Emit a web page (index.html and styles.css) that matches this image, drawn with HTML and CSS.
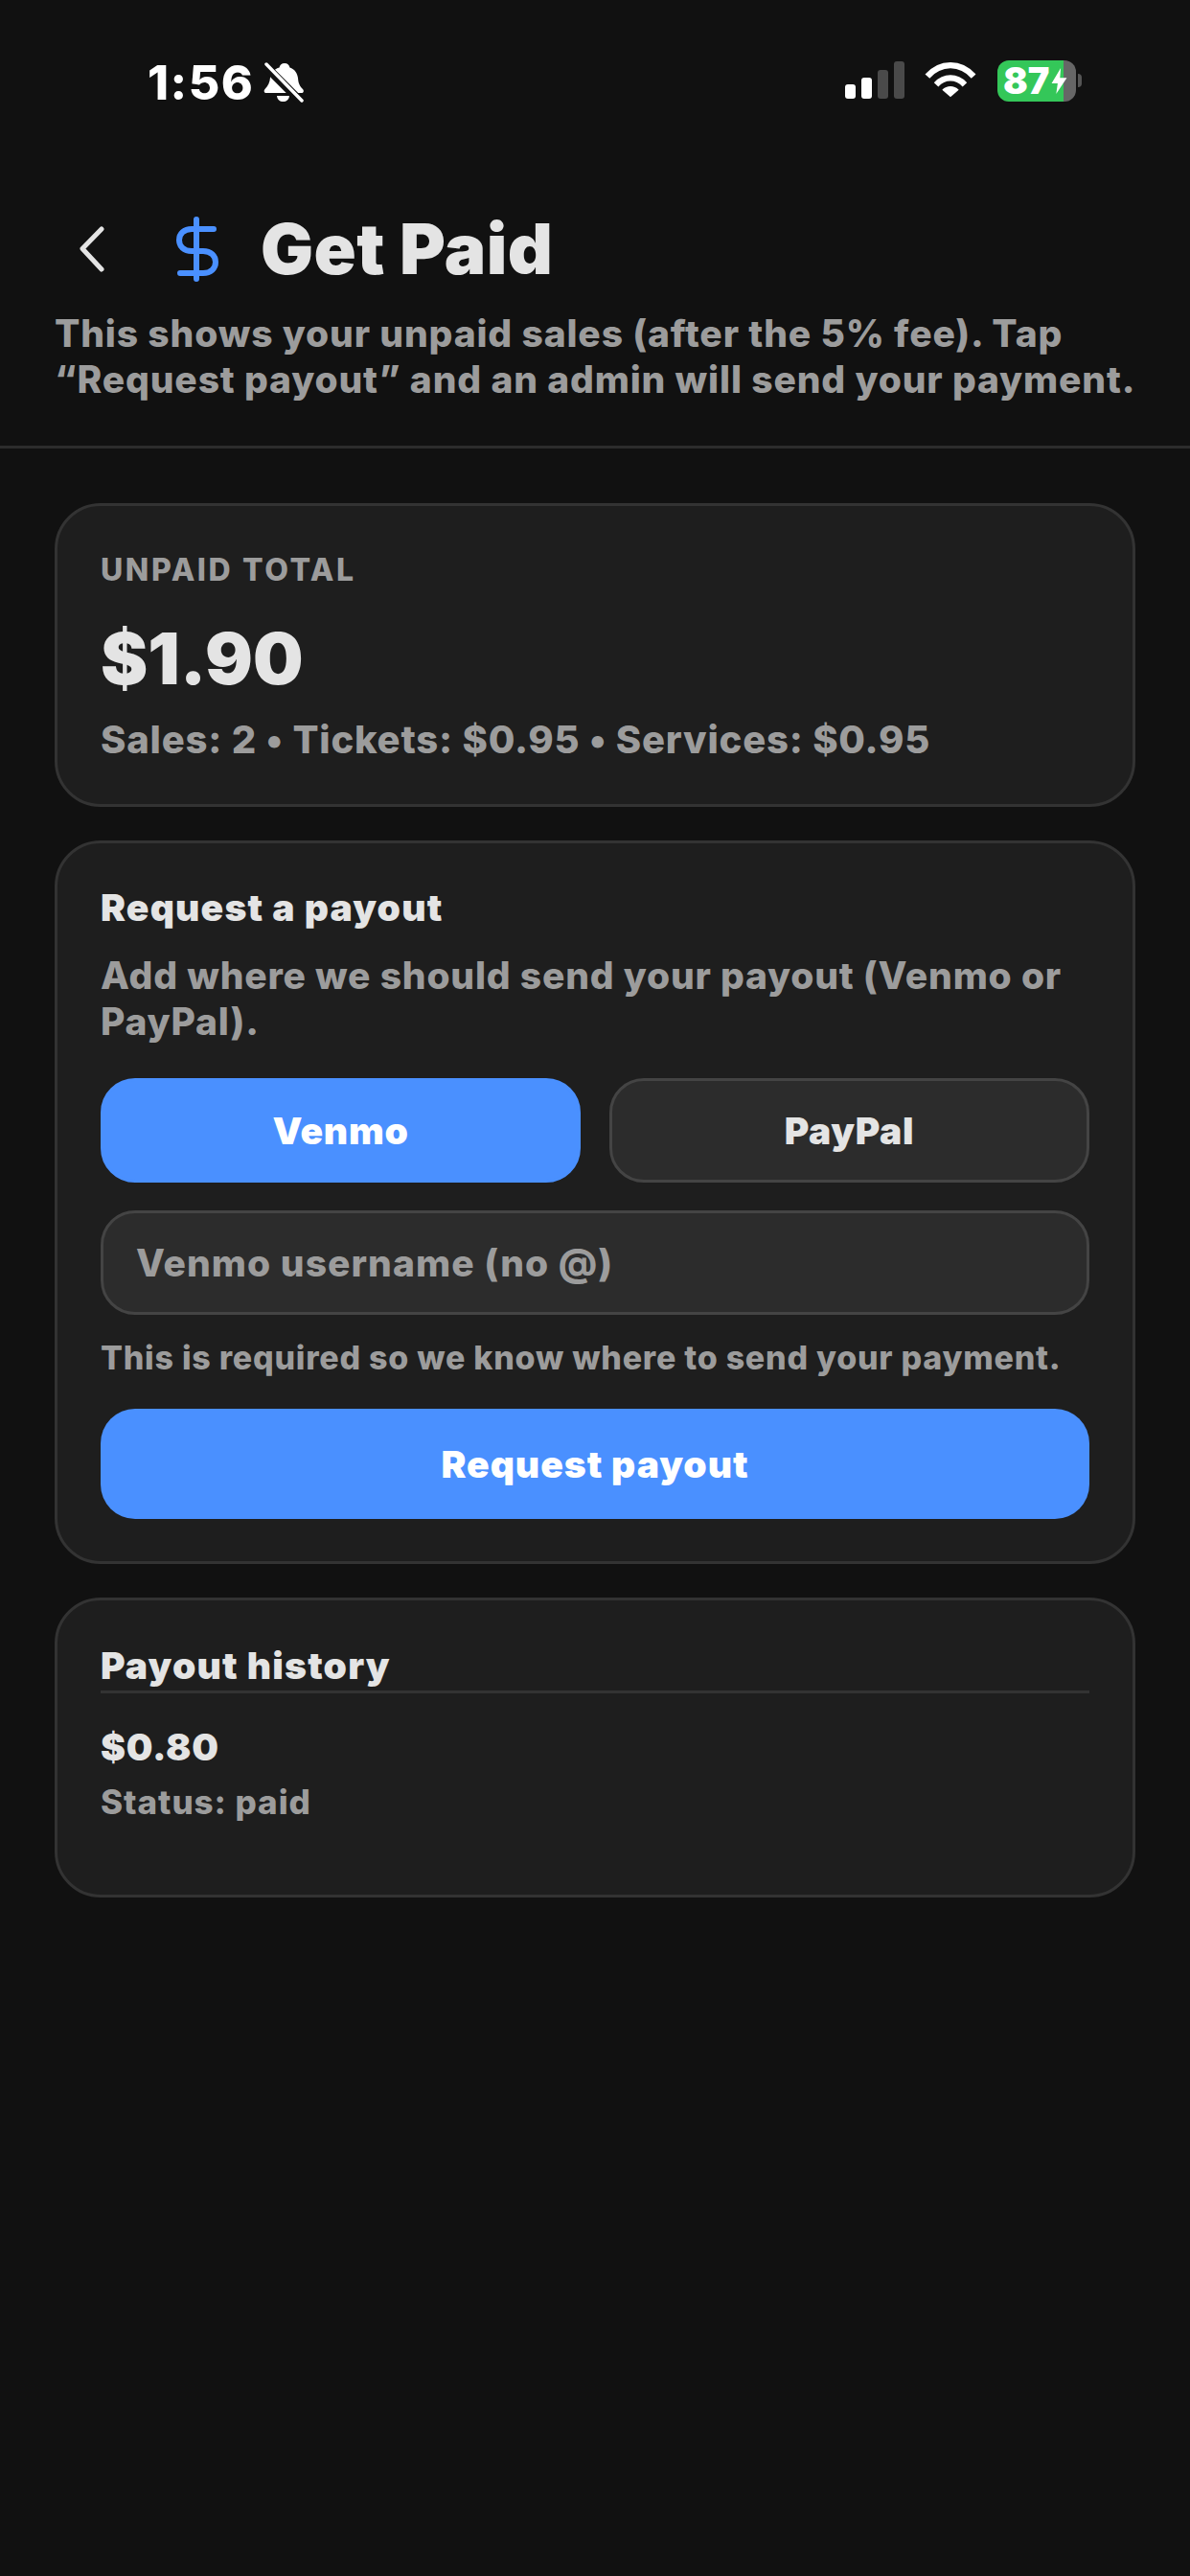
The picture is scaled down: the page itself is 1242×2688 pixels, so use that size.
FILE: index.html
```html
<!DOCTYPE html>
<html lang="en">
<head>
<meta charset="utf-8">
<title>Get Paid</title>
<link rel="stylesheet" href="styles.css">
</head>
<body>
<div class="status">
  <div class="status-left">
    <span class="time">1:56</span>
    <svg class="bell" viewBox="0 0 42 42"><path fill="#fff" d="M22 1c3 0 5 2 5.500 4.500 5 1.500 8 6 8.500 11 .4 5 1.500 8 5 11.500 1.500 1.500 1 4-1.500 4H3c-2.500 0-3-2.500-1.500-4 3.500-3.500 5-7 5.500-12 .3-4 3-8.500 9.500-10.500.5-2.500 2.500-4.500 5.500-4.500zM14 35h13c-.5 4-3 6-6.500 6S14.500 39 14 35z"/><path stroke="#111" stroke-width="9" d="M-1 -1l42 42" transform="translate(-1 1)"/><path stroke="#fff" stroke-width="3.500" stroke-linecap="round" d="M3 2l37 38"/></svg>
  </div>
  <div class="status-right">
    <svg class="signal" viewBox="0 0 62 40"><rect x="0" y="24" width="11" height="15" rx="3" fill="#fff"/><rect x="17" y="17" width="11" height="22" rx="3" fill="#fff"/><rect x="34" y="9" width="11" height="30" rx="3" fill="#4a4a4a"/><rect x="51" y="0" width="11" height="39" rx="3" fill="#4a4a4a"/></svg>
    <svg class="wifi" viewBox="0 0 56 40"><path fill="none" stroke="#fff" stroke-width="6.500" d="M3 15.500C17-.5 39-.5 53 15.500M12.500 24.500c9-9.500 22-9.500 31 0"/><path fill="#fff" d="M28 38 19 30c5-5 13-5 18 0z"/></svg>
    <div class="battery">
      <div class="battery-body"><span class="battery-level">87</span><svg class="bolt" viewBox="0 0 20 34"><path fill="#fff" d="M12 0 0 20h8L6 34 20 13h-9z"/></svg></div>
      <div class="battery-nub"></div>
    </div>
  </div>
</div>

<header class="head">
  <div class="title-row">
    <svg class="back" viewBox="0 0 26 48"><path fill="none" stroke="#e4e4e4" stroke-width="5" stroke-linecap="round" stroke-linejoin="round" d="M23 3 3 23.500 23 45"/></svg>
    <svg class="dollar" viewBox="0 0 44 68"><path fill="none" stroke="#4a90ff" stroke-width="6" stroke-linecap="round" d="M21 3v62M39 13H16C8 13 3 18 3 24.500S8 36 16 36h12c8 0 13 5 13 11.500S36 59 28 59H4"/></svg>
    <h1 class="title">Get Paid</h1>
  </div>
  <p class="sub">This shows your unpaid sales (after the 5% fee). Tap “Request payout” and an admin will send your payment.</p>
</header>

<main class="cards">
  <section class="card summary">
    <div class="eyebrow">UNPAID TOTAL</div>
    <div class="amount">$1.90</div>
    <div class="breakdown">Sales: 2 • Tickets: $0.95 • Services: $0.95</div>
  </section>

  <section class="card request">
    <h2 class="card-title">Request a payout</h2>
    <p class="hint">Add where we should send your payout (Venmo or PayPal).</p>
    <div class="choices">
      <div class="choice active">Venmo</div>
      <div class="choice">PayPal</div>
    </div>
    <div class="input">Venmo username (no @)</div>
    <p class="note">This is required so we know where to send your payment.</p>
    <div class="primary">Request payout</div>
  </section>

  <section class="card history">
    <h2 class="card-title ruled">Payout history</h2>
    <div class="paid">$0.80</div>
    <div class="state">Status: paid</div>
  </section>
</main>
</body>
</html>
```
FILE: styles.css
```css
* { box-sizing: border-box; }
html, body { margin: 0; padding: 0; }
body {
  width: 1242px;
  height: 2688px;
  background: #111111;
  color: #e4e4e4;
  font-family: Inter, "Liberation Sans", sans-serif;
  overflow: hidden;
}
.status {
  height: 190px;
  padding: 61px 113px 0 154px;
  display: flex;
  justify-content: space-between;
  align-items: flex-start;
}
.status-left { display: flex; align-items: center; gap: 10px; }
.time { font-size: 50px; line-height: 50px; font-weight: 800; letter-spacing: 1.500px; color: #fff; }
.bell { width: 42px; height: 42px; }
.status-right { display: flex; align-items: center; height: 46px; }
.signal { width: 62px; height: 40px; margin-right: 21px; }
.wifi { width: 54px; height: 40px; margin-right: 22px; }
.battery { display: flex; align-items: center; gap: 2px; }
.battery-body {
  width: 82px;
  height: 43px;
  border-radius: 12px;
  background: linear-gradient(90deg, #34c759 0, #34c759 84%, #666 84%);
  display: flex;
  align-items: center;
  padding-left: 6px;
}
.battery-level { font-size: 38px; line-height: 43px; font-weight: 900; color: #fff; margin-right: 1px; }
.bolt { width: 19px; height: 27px; }
.battery-nub { width: 4px; height: 14px; border-radius: 0 5px 5px 0; background: #555; }

.head { border-bottom: 3px solid #2c2c2c; padding: 30px 30px 26px 57px; height: 278px; }
.title-row { display: flex; align-items: center; height: 80px; }
.back { width: 26px; height: 48px; margin-left: 26px; }
.dollar { width: 44px; height: 68px; margin-left: 75px; }
.title { margin: 0 0 0 44px; font-size: 73px; line-height: 80px; font-weight: 900; letter-spacing: 0.500px; color: #e4e4e4; }
.sub { margin: 24px 0 0; font-size: 39px; line-height: 48px; font-weight: 800; letter-spacing: 0.850px; color: #9c9c9c; }

.cards { padding: 57px 57px 0; display: flex; flex-direction: column; gap: 35px; }
.card {
  background: #1e1e1e;
  border: 3px solid #333;
  border-radius: 48px;
  padding: 45px;
}
.summary { height: 317px; padding-top: 47px; }
.eyebrow { font-size: 32px; line-height: 40px; font-weight: 800; letter-spacing: 2.600px; color: #9c9c9c; }
.amount { font-size: 74px; line-height: 88px; margin-top: 28px; font-weight: 900; color: #e4e4e4; }
.breakdown { font-size: 40px; line-height: 48px; margin-top: 17px; font-weight: 800; letter-spacing: 0.800px; color: #9c9c9c; }

.request { height: 755px; padding-top: 43px; }
.card-title { margin: 0; font-size: 39px; line-height: 48px; font-weight: 900; letter-spacing: 1.200px; color: #e4e4e4; }
.hint { margin: 23px 0 0; font-size: 39px; line-height: 48px; font-weight: 800; letter-spacing: 0.800px; color: #9c9c9c; }
.choices { display: flex; gap: 30px; margin-top: 35px; }
.choice {
  flex: 1;
  height: 109px;
  border-radius: 36px;
  border: 3px solid #444;
  background: #2c2c2c;
  color: #e4e4e4;
  font-size: 39px;
  font-weight: 900;
  letter-spacing: 0.700px;
  display: flex;
  align-items: center;
  justify-content: center;
}
.choice.active { background: #4a90ff; border-color: #4a90ff; color: #fff; }
.input {
  margin-top: 29px;
  height: 109px;
  border-radius: 36px;
  border: 3px solid #444;
  background: #2c2c2c;
  padding-left: 34px;
  color: #9c9c9c;
  font-size: 39px;
  font-weight: 800;
  letter-spacing: 1.050px;
  display: flex;
  align-items: center;
}
.note { margin: 24px 0 0; font-size: 34px; line-height: 42px; font-weight: 800; letter-spacing: 0.750px; color: #9c9c9c; }
.primary {
  margin-top: 32px;
  height: 115px;
  border-radius: 36px;
  background: #4a90ff;
  color: #fff;
  font-size: 39px;
  font-weight: 900;
  letter-spacing: 1px;
  display: flex;
  align-items: center;
  justify-content: center;
}

.history { height: 313px; padding-top: 44px; }
.ruled { border-bottom: 3px solid #333; height: 53px; line-height: 48px; }
.paid { margin-top: 32px; font-size: 39px; line-height: 48px; font-weight: 900; letter-spacing: 0.800px; color: #e4e4e4; }
.state { margin-top: 12px; font-size: 35px; line-height: 42px; font-weight: 800; letter-spacing: 0.950px; color: #9c9c9c; }
```
